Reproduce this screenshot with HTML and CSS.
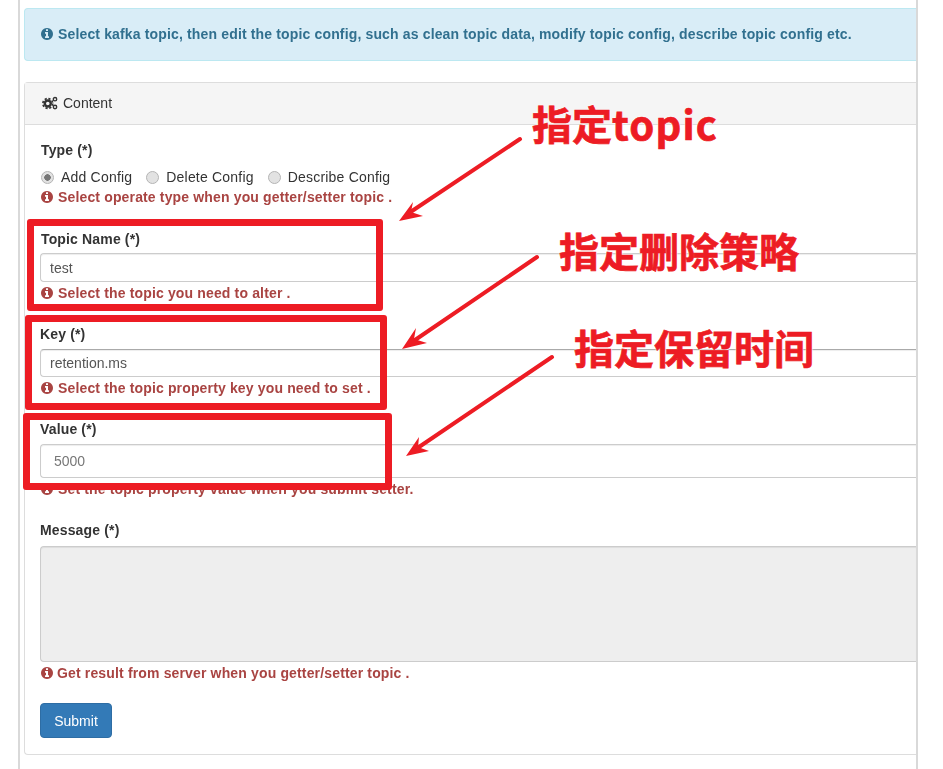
FILE: index.html
```html
<!DOCTYPE html>
<html lang="en">
<head>
<meta charset="utf-8">
<title>Topic Config</title>
<link rel="stylesheet" href="styles.css">
</head>
<body>
<svg class="defs" width="0" height="0" aria-hidden="true">
  <symbol id="info" viewBox="0 0 1792 1792">
    <path d="M1152 1376v-160q0-14-9-23t-23-9h-96v-512q0-14-9-23t-23-9h-320q-14 0-23 9t-9 23v160q0 14 9 23t23 9h96v320h-96q-14 0-23 9t-9 23v160q0 14 9 23t23 9h448q14 0 23-9t9-23zm-128-896v-160q0-14-9-23t-23-9h-192q-14 0-23 9t-9 23v160q0 14 9 23t23 9h192q14 0 23-9t9-23zm640 416q0 209-103 385.5t-279.5 279.5-385.5 103-385.5-103-279.5-279.5-103-385.5 103-385.5 279.5-279.5 385.5-103 385.5 103 279.5 279.5 103 385.5z"/>
  </symbol>
</svg>
<main class="frame">
  <div class="alert"><svg class="ico"><use href="#info"/></svg>Select kafka topic, then edit the topic config, such as clean topic data, modify topic config, describe topic config etc.</div>
  <section class="panel">
    <header class="panel-heading">
      <svg class="cogs" viewBox="0 0 16 14" aria-hidden="true">
        <circle cx="5.8" cy="7.5" r="3" fill="none" stroke="#333" stroke-width="2.4"/>
        <circle cx="5.8" cy="7.5" r="4.9" fill="none" stroke="#333" stroke-width="1.7" stroke-dasharray="2.2 1.65"/>
        <circle cx="13" cy="3.2" r="1.7" fill="none" stroke="#333" stroke-width="1.4"/>
        <circle cx="13" cy="11" r="1.7" fill="none" stroke="#333" stroke-width="1.4"/>
      </svg>Content
    </header>
    <form class="panel-body">
      <div class="group">
        <label class="lbl lbl-in">Type (*)</label>
        <div class="radios">
          <label class="radio"><input type="radio" name="type" checked disabled>Add Config</label>
          <label class="radio"><input type="radio" name="type" disabled>Delete Config</label>
          <label class="radio"><input type="radio" name="type" disabled>Describe Config</label>
        </div>
        <p class="help help-flush"><svg class="ico"><use href="#info"/></svg>Select operate type when you getter/setter topic .</p>
      </div>
      <div class="group group-topic">
        <label class="lbl lbl-in">Topic Name (*)</label>
        <input class="field" type="text" value="test">
        <p class="help"><svg class="ico"><use href="#info"/></svg>Select the topic you need to alter .</p>
      </div>
      <div class="group group-key">
        <label class="lbl">Key (*)</label>
        <input class="field field-dark" type="text" value="retention.ms">
        <p class="help"><svg class="ico"><use href="#info"/></svg>Select the topic property key you need to set .</p>
      </div>
      <div class="group group-value">
        <label class="lbl">Value (*)</label>
        <input class="field field-tall" type="text" value="5000">
        <p class="help"><svg class="ico"><use href="#info"/></svg>Set the topic property value when you submit setter.</p>
      </div>
      <div class="group group-message">
        <label class="lbl">Message (*)</label>
        <textarea class="area" disabled></textarea>
        <p class="help help-tight"><svg class="ico"><use href="#info"/></svg>Get result from server when you getter/setter topic .</p>
      </div>
      <button class="submit" type="button">Submit</button>
    </form>
  </section>
</main>

<div class="box box-1"></div>
<div class="box box-2"></div>
<div class="box box-3"></div>
<svg class="arrows" width="943" height="769" aria-hidden="true">
  <g class="arrow">
    <path class="shaft" d="M520 139 L412 211"/>
    <path class="head" d="M399 221 L413 202 L411 212 L423 216 Z"/>
    <path class="shaft" d="M537 257 L415 340"/>
    <path class="head" d="M402 349 L416 328 L414 339 L427 343 Z"/>
    <path class="shaft" d="M552 357 L419 447"/>
    <path class="head" d="M406 456 L419 437 L418 447 L429 451 Z"/>
  </g>
</svg>
<div class="note note-1">指定<span class="note-latin">topic</span></div>
<div class="note note-2">指定删除策略</div>
<div class="note note-3">指定保留时间</div>
</body>
</html>
```
FILE: styles.css
```css
* { box-sizing: border-box; }
html, body { margin: 0; padding: 0; background: #fff; }
body {
  width: 943px;
  height: 769px;
  overflow: hidden;
  position: relative;
  font-family: "Liberation Sans", Arial, sans-serif;
  font-size: 14px;
  line-height: 20px;
  color: #333;
}
.defs { position: absolute; }

.frame {
  margin-left: 18px;
  width: 900px;
  height: 769px;
  padding: 8px 0 0 4px;
  border-left: 2px solid #d9d9d9;
  border-right: 2px solid #d9d9d9;
  overflow: hidden;
  filter: blur(0.45px);
}

.ico {
  width: 14px;
  height: 14px;
  margin-right: 4px;
  fill: currentColor;
  vertical-align: -2px;
}

.alert {
  height: 53px;
  padding: 15px 0 0 15px;
  background: #d9edf7;
  border: 1px solid #bce8f1;
  border-right: 0;
  border-radius: 4px 0 0 4px;
  color: #31708f;
  font-weight: 700;
  letter-spacing: .15px;
  white-space: nowrap;
}

.panel {
  margin-top: 21px;
  height: 673px;
  border: 1px solid #ddd;
  border-right: 0;
  border-radius: 4px 0 0 4px;
}
.panel-heading {
  height: 42px;
  padding: 10px 0 0 17px;
  background: #f5f5f5;
  border-bottom: 1px solid #ddd;
}
.cogs { width: 16px; height: 14px; margin-right: 5px; vertical-align: -2px; }

.panel-body { padding: 15px 0 0 15px; }

.group { margin-bottom: 22px; }
.group-topic, .group-key, .group-value { margin-bottom: 21px; }
.group-message { margin-bottom: 20px; }
.lbl { display: block; font-weight: 700; margin-bottom: 5px; letter-spacing: .15px; }
.lbl-in { padding-left: 1px; }
.group-topic .lbl { margin-bottom: 4px; }
.group-message .lbl { margin-bottom: 6px; }

.radios { display: flex; height: 22px; padding: 2px 0 0 1px; margin-top: 2px; }
.radio { display: flex; align-items: center; margin-right: 14px; letter-spacing: .2px; }
.radio input {
  appearance: none;
  width: 13px;
  height: 13px;
  margin: 0 7px 0 0;
  border: 1px solid #b4b4b4;
  border-radius: 50%;
  background: #e2e2e2;
}
.radio input:checked {
  background: radial-gradient(circle, #777 0 3px, #e2e2e2 3.5px);
}

.field {
  display: block;
  width: 100%;
  height: 29px;
  padding: 0 9px;
  border: 1px solid #ccc;
  border-right: 0;
  border-radius: 4px 0 0 4px;
  background: #fff;
  font: 14px "Liberation Sans", Arial, sans-serif;
  color: #555;
  outline: 0;
  box-shadow: inset 0 1px 1px rgba(0,0,0,.075);
}
.field-dark { height: 28px; border-top-color: #aaa; }
.field-tall { height: 34px; padding-left: 13px; color: #777; }

.area {
  display: block;
  width: 100%;
  height: 116px;
  border: 1px solid #ccc;
  border-right: 0;
  border-radius: 4px 0 0 4px;
  background: #eee;
  resize: none;
  outline: 0;
  box-shadow: inset 0 1px 1px rgba(0,0,0,.075);
}

.help {
  margin: 1px 0 0;
  color: #a94442;
  font-weight: 700;
  letter-spacing: .15px;
  white-space: nowrap;
}
.help-flush { margin-top: 0; }
.help-tight .ico { margin-right: 3px; }

.submit {
  display: block;
  width: 72px;
  height: 35px;
  padding: 0;
  background: #337ab7;
  border: 1px solid #2e6da4;
  border-radius: 4px;
  color: #fff;
  font: 14px "Liberation Sans", Arial, sans-serif;
}

/* annotations drawn over the screenshot */
.box {
  position: absolute;
  border: 7px solid #ed1c24;
  border-radius: 3px;
}
.box-1 { left: 27px; top: 219px; width: 356px; height: 92px; }
.box-2 { left: 25px; top: 315px; width: 362px; height: 95px; }
.box-3 { left: 23px; top: 413px; width: 369px; height: 77px; }

.arrows { position: absolute; left: 0; top: 0; }
.shaft { stroke: #ed1c24; stroke-width: 4; stroke-linecap: round; fill: none; }
.head { fill: #ed1c24; }

.note {
  position: absolute;
  font-family: "Noto Sans CJK SC", "Liberation Sans", sans-serif;
  font-weight: 700;
  font-size: 40px;
  line-height: 50px;
  color: #ed1c24;
  -webkit-text-stroke: 0.7px #ed1c24;
  white-space: nowrap;
  text-shadow: 0 0 2px #fff, 0 0 2px #fff, 0 0 2px #fff;
}
.note-latin { letter-spacing: 1.2px; }
.note-1 { left: 532px; top: 98px; }
.note-2 { left: 559px; top: 225px; }
.note-3 { left: 574px; top: 322px; }
```
